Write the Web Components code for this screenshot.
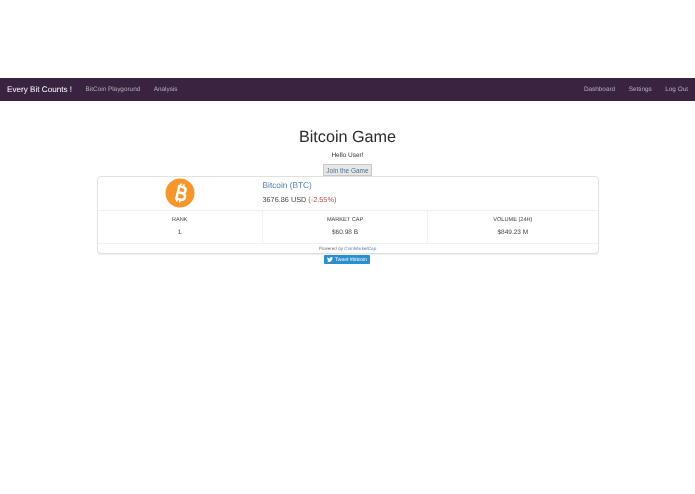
<!DOCTYPE html>
<html>
<head>
<meta charset="utf-8">
<title>Bitcoin Game</title>
<style>
  html, body { margin: 0; background: #fff; font-family: "Liberation Sans", Arial, sans-serif; color: #333; }
  body { padding-top: 78px; font-size: 6.5px; text-rendering: geometricPrecision; filter: blur(.3px); min-height: 416px; }
</style>
</head>
<body>
<top-nav brand="Every Bit Counts !">
  <nav-item>BitCoin Playgorund</nav-item>
  <nav-item>Analysis</nav-item>
  <nav-item slot="right">Dashboard</nav-item>
  <nav-item slot="right">Settings</nav-item>
  <nav-item slot="right">Log Out</nav-item>
</top-nav>
<game-page title-text="Bitcoin Game" hello="Hello User!" action="Join the Game">
  <coin-card name="Bitcoin (BTC)" price="3676.86 USD" change="(-2.55%)">
    <stat-cell label="RANK" value="1" style="flex:165"></stat-cell>
    <stat-cell label="MARKET CAP" value="$60.98 B" style="flex:165"></stat-cell>
    <stat-cell label="VOLUME (24H)" value="$849.23 M" style="flex:170"></stat-cell>
  </coin-card>
  <tweet-button>Tweet #bitcoin</tweet-button>
</game-page>

<script>
class TopNav extends HTMLElement {
  constructor() {
    super();
    this.attachShadow({ mode: 'open' });
    this.shadowRoot.innerHTML = `
      <style>
        :host { display: flex; align-items: center; height: 23px; background: #3a2341; padding: 0 7px; }
        #brand { color: #fff; font-size: 8.15px; margin-right: 13.5px; white-space: nowrap; }
        .links { display: flex; gap: 13.5px; }
        .right { margin-left: auto; }
      </style>
      <span id="brand"></span>
      <div class="links"><slot></slot></div>
      <div class="links right"><slot name="right"></slot></div>
    `;
    this.shadowRoot.querySelector('#brand').textContent = this.getAttribute('brand');
  }
}

class NavItem extends HTMLElement {
  constructor() {
    super();
    this.attachShadow({ mode: 'open' });
    this.shadowRoot.innerHTML = `
      <style>:host { display: block; color: #b4b0b6; font-size: 6.4px; white-space: nowrap; }</style>
      <slot></slot>
    `;
  }
}

class GamePage extends HTMLElement {
  constructor() {
    super();
    this.attachShadow({ mode: 'open' });
    this.shadowRoot.innerHTML = `
      <style>
        :host { display: flex; flex-direction: column; align-items: center; padding-top: 27px; }
        h1 { margin: 0; font-size: 16.2px; font-weight: 400; line-height: 18px; color: #2b2b2b; }
        p { margin: 5px 0 0; font-size: 6.5px; line-height: 9px; color: #333; }
        button {
          margin-top: 4px; height: 12px; width: 49px; padding: 0; box-sizing: border-box;
          background: #e6e6e6; border: 1px solid #c9c9c9; color: #53708c;
          font: 6.5px "Liberation Sans", Arial, sans-serif;
        }
      </style>
      <h1></h1>
      <p></p>
      <button></button>
      <slot></slot>
    `;
    this.shadowRoot.querySelector('h1').textContent = this.getAttribute('title-text');
    this.shadowRoot.querySelector('p').textContent = this.getAttribute('hello');
    this.shadowRoot.querySelector('button').textContent = this.getAttribute('action');
  }
}

class CoinCard extends HTMLElement {
  constructor() {
    super();
    this.attachShadow({ mode: 'open' });
    this.shadowRoot.innerHTML = `
      <style>
        :host {
          display: block; box-sizing: border-box; width: 502px; height: 78px;
          border: 1px solid #e1e1e1; border-radius: 4px; box-shadow: 0 1px 1px #eee; background: #fff;
        }
        .top { display: flex; height: 33px; border-bottom: 1px solid #f0f0f0; }
        .logo { width: 165px; display: flex; justify-content: center; align-items: flex-start; padding-top: 1px; }
        .logo svg { display: block; }
        .name { color: #4f81ad; font-size: 8.3px; line-height: 10px; margin-top: 3px; }
        .price { font-size: 7.3px; line-height: 10px; margin-top: 5px; color: #444; }
        .change { color: #a8514f; }
        .stats { display: flex; height: 32px; border-bottom: 1px solid #f0f0f0; }
        .foot { text-align: center; font-size: 4.6px; line-height: 10px; font-style: italic; color: #777; }
        .foot span { color: #5b87ab; }
      </style>
      <div class="top">
        <div class="logo">
          <svg width="30" height="30" viewBox="0 0 30 30">
            <circle cx="15" cy="15" r="14.5" fill="#f6962b"/>
            <g transform="rotate(14 15 15)" fill="none" stroke="#fff">
              <path stroke-width="2.4" d="M11.3 8.500h5.200c2 0 3.300 1.200 3.300 3s-1.300 3.200-3.300 3.200h-4.400M12.100 14.700h5.200c2.200 0 3.500 1.300 3.500 3.200s-1.300 3.400-3.500 3.400h-6"/>
              <path stroke-width="2.4" d="M12.700 8.500v12.800"/>
              <path stroke-width="1.6" d="M13.800 5.500v3M16.800 5.500v3M13.800 21.200v3M16.800 21.200v3"/>
            </g>
          </svg>
        </div>
        <div class="info">
          <div class="name"></div>
          <div class="price"><span class="p"></span> <span class="change"></span></div>
        </div>
      </div>
      <div class="stats"><slot></slot></div>
      <div class="foot">Powered by <span>CoinMarketCap</span></div>
    `;
    this.shadowRoot.querySelector('.name').textContent = this.getAttribute('name');
    this.shadowRoot.querySelector('.p').textContent = this.getAttribute('price');
    this.shadowRoot.querySelector('.change').textContent = this.getAttribute('change');
  }
}

class StatCell extends HTMLElement {
  constructor() {
    super();
    this.attachShadow({ mode: 'open' });
    this.shadowRoot.innerHTML = `
      <style>
        :host { display: block; min-width: 0; text-align: center; border-right: 1px solid #f0f0f0; color: #444; }
        :host(:last-child) { border-right: 0; }
        .label { font-size: 5.6px; line-height: 8px; margin-top: 5px; }
        .value { font-size: 6.5px; line-height: 9px; margin-top: 4px; }
      </style>
      <div class="label"></div>
      <div class="value"></div>
    `;
    this.shadowRoot.querySelector('.label').textContent = this.getAttribute('label');
    this.shadowRoot.querySelector('.value').textContent = this.getAttribute('value');
  }
}

class TweetButton extends HTMLElement {
  constructor() {
    super();
    this.attachShadow({ mode: 'open' });
    this.shadowRoot.innerHTML = `
      <style>
        :host {
          display: flex; align-items: center; justify-content: center; gap: 2px; box-sizing: border-box;
          width: 46px; height: 9px; margin-top: 1px; margin-left: -1px; background: #2a8fd0; border-radius: 1px;
          color: #fff; font-size: 5px; white-space: nowrap;
        }
        svg { display: block; }
      </style>
      <svg width="6" height="5" viewBox="0 0 24 20"><path fill="#fff" d="M24 2.400a9.800 9.800 0 0 1-2.800.8 4.900 4.900 0 0 0 2.200-2.700 9.800 9.800 0 0 1-3.100 1.200A4.900 4.900 0 0 0 11.900 6.100 14 14 0 0 1 1.700.9a4.900 4.900 0 0 0 1.500 6.600 4.900 4.900 0 0 1-2.200-.6v.1a4.900 4.900 0 0 0 3.900 4.800 4.900 4.900 0 0 1-2.200.1 4.900 4.900 0 0 0 4.600 3.400A9.900 9.900 0 0 1 0 17.400 14 14 0 0 0 7.500 19.600c9.100 0 14-7.500 14-14v-.6A10 10 0 0 0 24 2.400z"/></svg>
      <slot></slot>
    `;
  }
}

customElements.define('top-nav', TopNav);
customElements.define('nav-item', NavItem);
customElements.define('game-page', GamePage);
customElements.define('coin-card', CoinCard);
customElements.define('stat-cell', StatCell);
customElements.define('tweet-button', TweetButton);
</script>
</body>
</html>
